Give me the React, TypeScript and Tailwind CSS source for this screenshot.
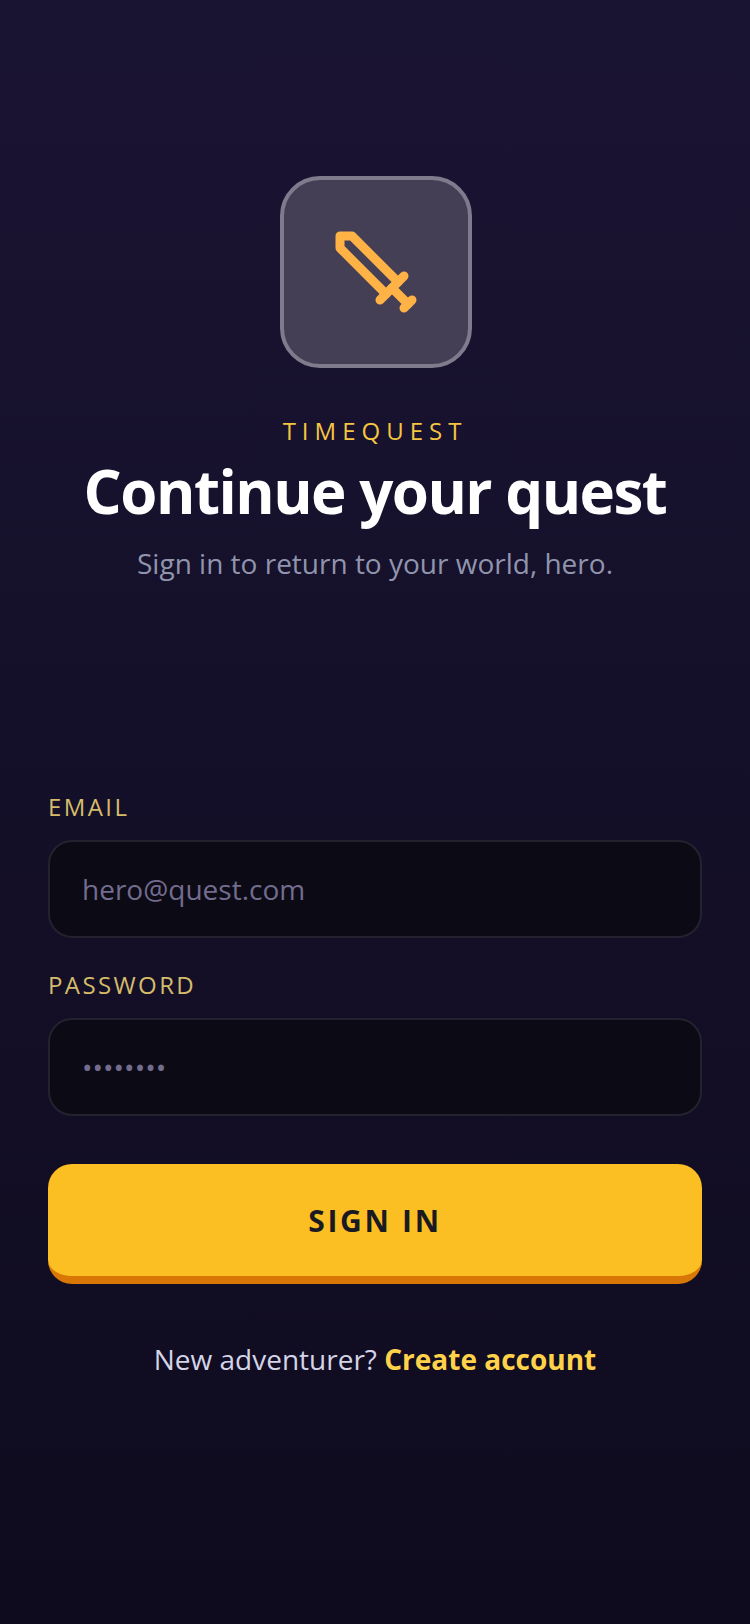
import { Sword } from 'lucide-react';

function Field({ label, placeholder, type }: { label: string; placeholder: string; type: string }) {
  return (
    <div className="flex flex-col">
      <label className="text-[24px] leading-[32px] tracking-[2.4px] text-[#d4bc6a] mb-[17px]">{label}</label>
      <input
        type={type}
        placeholder={placeholder}
        readOnly
        className="h-[98px] w-full rounded-[24px] border-2 border-[#25222f] bg-[#0c0a15] px-8 text-[28px] text-white outline-none placeholder:text-[#736c8e]"
      />
    </div>
  );
}

export default function App() {
  return (
    <div className="flex min-h-[1624px] w-[750px] flex-col bg-gradient-to-b from-[#1a1433] to-[#0f0b1e] px-12 pt-[176px] font-['Open_Sans',sans-serif]">
      {/* Hero */}
      <div className="flex flex-col items-center text-center">
        <div className="ml-0.5 flex size-[192px] items-center justify-center rounded-[40px] border-4 border-[#7f7b8d] bg-[#453f55]">
          <Sword size={96} strokeWidth={2.25} className="-scale-x-100 text-[#ffb347]" />
        </div>
        <p className="mt-[47px] text-[24px] leading-[32px] tracking-[6px] text-[#f5c542]">TIMEQUEST</p>
        <h1 className="mt-1.5 text-[60px] leading-[76px] font-bold tracking-[-1.5px] text-white">Continue your quest</h1>
        <p className="mt-3 text-[28px] leading-[44px] text-[#9095ad]">Sign in to return to your world, hero.</p>
      </div>

      {/* Form */}
      <div className="mt-[206px] flex flex-col gap-[31px]">
        <Field label="EMAIL" placeholder="hero@quest.com" type="email" />
        <Field label="PASSWORD" placeholder="••••••••" type="password" />
      </div>

      <button className="mt-12 h-[120px] rounded-[24px] border-b-8 border-[#d97706] bg-[#fbbf24] text-[30px] font-bold tracking-[2.7px] text-[#1a1a22]">
        SIGN IN
      </button>

      <p className="mt-[53px] text-center text-[28px] leading-[44px] text-[#d4d4e8]">
        New adventurer? <span className="font-bold text-[#ffd24a]">Create account</span>
      </p>
    </div>
  );
}
